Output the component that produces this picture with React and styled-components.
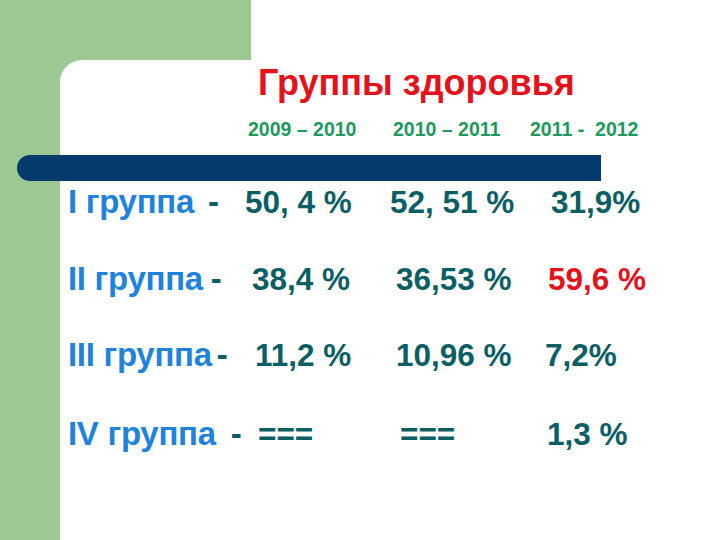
import React from "react";
import styled, { createGlobalStyle } from "styled-components";

const Global = createGlobalStyle`
  html, body { margin: 0; padding: 0; background: #ffffff; }
  body { font-family: "Liberation Sans", Arial, sans-serif; }
`;

const GREEN = "#9cc894";

const Slide = styled.div`
  width: 720px;
  height: 540px;
  overflow: hidden;
  display: grid;
  grid-template-columns: 60px 191px 1fr;
  grid-template-rows: 60px 1fr;
  background: ${GREEN};
`;

const TopWhite = styled.div`
  grid-column: 3;
  grid-row: 1;
  background: #ffffff;
`;

const Card = styled.div`
  grid-column: 2 / 4;
  grid-row: 2;
  background: #ffffff;
  border-top-left-radius: 22px;
  display: flex;
  flex-direction: column;
  padding-top: 5px;
`;

const Title = styled.h1`
  margin: 0 0 0 198px;
  font-size: 36px;
  line-height: 36px;
  font-weight: 700;
  color: #e5121b;
  white-space: nowrap;
`;

const Grid = styled.div`
  display: grid;
  grid-template-columns: 177px 145px 140px 1fr;
  align-items: baseline;
  padding-left: 8px;
`;

const YearRow = styled(Grid)`
  margin-top: 19px;
  height: 19px;
`;

const Year = styled.div`
  grid-column: ${(p) => p.$col};
  padding-left: ${(p) => p.$indent}px;
  font-size: 19.5px;
  line-height: 19px;
  font-weight: 700;
  color: #1f9a5c;
  white-space: pre;
`;

const Bar = styled.div`
  margin: 16px 0 0 -43px;
  width: 584px;
  height: 26px;
  background: #053a6c;
  border-radius: 13px 0 0 13px;
`;

const Rows = styled.div`
  margin-top: 4px;
  display: flex;
  flex-direction: column;
`;

const Row = styled(Grid)`
  height: ${(p) => p.$h}px;
`;

const Label = styled.div`
  grid-column: 1;
  font-size: 33px;
  line-height: 33px;
  font-weight: 700;
  color: #1f82dc;
  white-space: pre;
  letter-spacing: -0.3px;
`;

const Dash = styled.span`
  color: #0b5e63;
  margin-left: ${(p) => p.$gap}px;
`;

const Value = styled.div`
  grid-column: ${(p) => p.$col};
  padding-left: ${(p) => p.$indent}px;
  font-size: 31.5px;
  line-height: 31px;
  font-weight: 700;
  color: ${(p) => (p.$red ? "#e5121b" : "#0b5e63")};
  white-space: pre;
`;

const years = [
  { text: "2009 – 2010", indent: 3 },
  { text: "2010 – 2011", indent: 3 },
  { text: "2011 -  2012", indent: 0 },
];

const rows = [
  { roman: "I", gap: 14, h: 77, vals: [["50, 4 %", 0], ["52, 51 %", 0], ["31,9%", 21]] },
  { roman: "II", gap: 8, h: 76, vals: [["38,4 %", 7], ["36,53 %", 6], ["59,6 %", 18, true]] },
  { roman: "III", gap: 5, h: 79, vals: [["11,2 %", 10], ["10,96 %", 6], ["7,2%", 15]] },
  { roman: "IV", gap: 15, h: 77, vals: [["===", 13], ["===", 10], ["1,3 %", 17]] },
];

export default function App() {
  return (
    <>
      <Global />
      <Slide>
        <TopWhite />
        <Card>
          <Title>Группы здоровья</Title>
          <YearRow>
            {years.map((y, i) => (
              <Year key={i} $col={i + 2} $indent={y.indent}>
                {y.text}
              </Year>
            ))}
          </YearRow>
          <Bar />
          <Rows>
            {rows.map((r) => (
              <Row key={r.roman} $h={r.h}>
                <Label>
                  {r.roman} группа<Dash $gap={r.gap}>-</Dash>
                </Label>
                {r.vals.map(([t, ind, red], i) => (
                  <Value key={i} $col={i + 2} $indent={ind} $red={red}>
                    {t}
                  </Value>
                ))}
              </Row>
            ))}
          </Rows>
        </Card>
      </Slide>
    </>
  );
}
